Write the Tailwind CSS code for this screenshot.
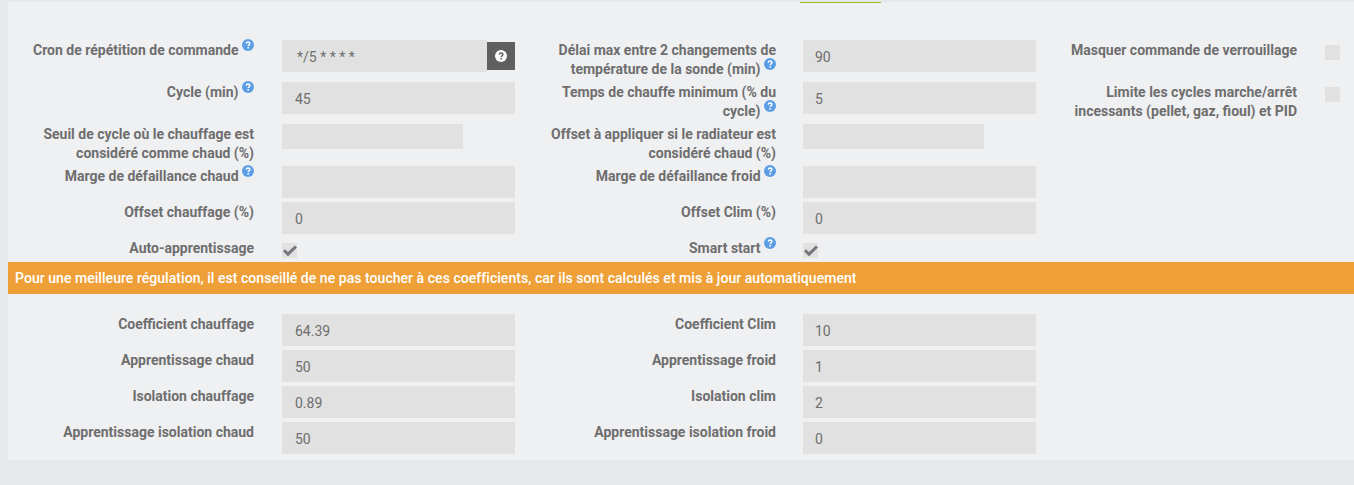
<!DOCTYPE html>
<html lang="fr">
<head>
  <meta charset="UTF-8">
  <title>Configuration thermostat</title>
  <script src="https://cdn.jsdelivr.net/npm/@tailwindcss/browser@4"></script>
</head>
<body class="bg-[#e7e8ea] font-['Roboto',sans-serif] text-[14px] leading-[19px] text-[#6e6e6e] overflow-hidden">
  <div class="h-[485px] pt-[2px] pl-[8px]">
    <div class="h-[458px] bg-[#eff0f2]">
      <!-- tab indicator -->
      <div class="ml-[792px] w-[81px] h-[1px] bg-[#94c11f]"></div>

      <!-- Main settings -->
      <form class="mt-[37px] grid grid-cols-[246px_261px_261px_260px_261px_1fr] grid-rows-[42px_42px_42px_36px_36px_24px]">
        <label class="col-start-1 pt-[1px] text-right font-bold">Cron de répétition de commande <svg class="inline-block align-[4px] -mt-[4px]" width="12" height="12" viewBox="0 0 12 12"><circle cx="6" cy="6" r="6" fill="#5c9ee6"/><path d="M4.2 4.6C4.3 3.6 5 3 6 3s1.9.6 1.9 1.6c0 1.3-1.7 1.3-1.7 2.5" fill="none" stroke="#fff" stroke-width="1.4"/><rect x="5.4" y="8" width="1.6" height="1.5" fill="#fff"/></svg></label>
        <div class="pl-[28px] flex items-center h-[32px]">
          <input class="w-[205px] h-[32px] pl-[15px] pt-[2px] bg-[#e0e1e0]" value="*/5 * * * *">
          <button type="button" class="w-[28px] h-[28px] bg-[#5f5f5f] flex items-center justify-center">
            <svg width="12" height="12" viewBox="0 0 12 12"><circle cx="6" cy="6" r="6" fill="#fff"/><path d="M4.2 4.6C4.3 3.6 5 3 6 3s1.9.6 1.9 1.6c0 1.3-1.7 1.3-1.7 2.5" fill="none" stroke="#5f5f5f" stroke-width="1.4"/><rect x="5.4" y="8" width="1.6" height="1.5" fill="#5f5f5f"/></svg>
          </button>
        </div>
        <label class="pl-[28px] pt-[1px] text-right font-bold">Délai max entre 2 changements de température de la sonde (min) <svg class="inline-block align-[4px] -mt-[4px]" width="12" height="12" viewBox="0 0 12 12"><circle cx="6" cy="6" r="6" fill="#5c9ee6"/><path d="M4.2 4.6C4.3 3.6 5 3 6 3s1.9.6 1.9 1.6c0 1.3-1.7 1.3-1.7 2.5" fill="none" stroke="#fff" stroke-width="1.4"/><rect x="5.4" y="8" width="1.6" height="1.5" fill="#fff"/></svg></label>
        <div class="pl-[27px]"><input class="w-[233px] h-[32px] pl-[12px] pt-[2px] bg-[#e0e1e0]" value="90"></div>
        <label class="pt-[1px] pl-[28px] text-right font-bold">Masquer commande de verrouillage</label>
        <div class="pl-[28px] pt-[5px]"><div class="w-[15px] h-[15px] bg-[#e0e1e0]"></div></div>

        <label class="col-start-1 pt-[1px] text-right font-bold">Cycle (min) <svg class="inline-block align-[4px] -mt-[4px]" width="12" height="12" viewBox="0 0 12 12"><circle cx="6" cy="6" r="6" fill="#5c9ee6"/><path d="M4.2 4.6C4.3 3.6 5 3 6 3s1.9.6 1.9 1.6c0 1.3-1.7 1.3-1.7 2.5" fill="none" stroke="#fff" stroke-width="1.4"/><rect x="5.4" y="8" width="1.6" height="1.5" fill="#fff"/></svg></label>
        <div class="pl-[28px]"><input class="w-[233px] h-[32px] pl-[13px] pt-[2px] bg-[#e0e1e0]" value="45"></div>
        <label class="pl-[28px] pt-[1px] text-right font-bold">Temps de chauffe minimum (% du cycle) <svg class="inline-block align-[4px] -mt-[4px]" width="12" height="12" viewBox="0 0 12 12"><circle cx="6" cy="6" r="6" fill="#5c9ee6"/><path d="M4.2 4.6C4.3 3.6 5 3 6 3s1.9.6 1.9 1.6c0 1.3-1.7 1.3-1.7 2.5" fill="none" stroke="#fff" stroke-width="1.4"/><rect x="5.4" y="8" width="1.6" height="1.5" fill="#fff"/></svg></label>
        <div class="pl-[27px]"><input class="w-[233px] h-[32px] pl-[12px] pt-[2px] bg-[#e0e1e0]" value="5"></div>
        <label class="pt-[1px] pl-[28px] text-right font-bold">Limite les cycles marche/arrêt incessants (pellet, gaz, fioul) et PID</label>
        <div class="pl-[28px] pt-[5px]"><div class="w-[15px] h-[15px] bg-[#e0e1e0]"></div></div>

        <label class="col-start-1 pt-[1px] text-right font-bold">Seuil de cycle où le chauffage est considéré comme chaud (%)</label>
        <div class="pl-[28px]"><input class="w-[181px] h-[25px] bg-[#e0e1e0]"></div>
        <label class="pl-[28px] pt-[1px] text-right font-bold">Offset à appliquer si le radiateur est considéré chaud (%)</label>
        <div class="pl-[27px]"><input class="w-[181px] h-[25px] bg-[#e0e1e0]"></div>

        <label class="col-start-1 pt-[1px] text-right font-bold">Marge de défaillance chaud <svg class="inline-block align-[4px] -mt-[4px]" width="12" height="12" viewBox="0 0 12 12"><circle cx="6" cy="6" r="6" fill="#5c9ee6"/><path d="M4.2 4.6C4.3 3.6 5 3 6 3s1.9.6 1.9 1.6c0 1.3-1.7 1.3-1.7 2.5" fill="none" stroke="#fff" stroke-width="1.4"/><rect x="5.4" y="8" width="1.6" height="1.5" fill="#fff"/></svg></label>
        <div class="pl-[28px]"><input class="w-[233px] h-[32px] bg-[#e0e1e0]"></div>
        <label class="pt-[1px] text-right font-bold">Marge de défaillance froid <svg class="inline-block align-[4px] -mt-[4px]" width="12" height="12" viewBox="0 0 12 12"><circle cx="6" cy="6" r="6" fill="#5c9ee6"/><path d="M4.2 4.6C4.3 3.6 5 3 6 3s1.9.6 1.9 1.6c0 1.3-1.7 1.3-1.7 2.5" fill="none" stroke="#fff" stroke-width="1.4"/><rect x="5.4" y="8" width="1.6" height="1.5" fill="#fff"/></svg></label>
        <div class="pl-[27px]"><input class="w-[233px] h-[32px] bg-[#e0e1e0]"></div>

        <label class="col-start-1 pt-[1px] text-right font-bold">Offset chauffage (%)</label>
        <div class="pl-[28px]"><input class="w-[233px] h-[32px] pl-[13px] pt-[2px] bg-[#e0e1e0]" value="0"></div>
        <label class="pt-[1px] text-right font-bold">Offset Clim (%)</label>
        <div class="pl-[27px]"><input class="w-[233px] h-[32px] pl-[12px] pt-[2px] bg-[#e0e1e0]" value="0"></div>

        <label class="col-start-1 pt-[1px] text-right font-bold">Auto-apprentissage</label>
        <div class="pl-[28px] pt-[5px]"><div class="w-[15px] h-[15px] bg-[#e0e1e0] flex items-center justify-center"><svg width="14" height="11" viewBox="0 0 14 11"><path d="M1 5.2 5 9.2 13 1.5" fill="none" stroke="#75757b" stroke-width="3"/></svg></div></div>
        <label class="pt-[1px] text-right font-bold">Smart start <svg class="inline-block align-[4px] -mt-[4px]" width="12" height="12" viewBox="0 0 12 12"><circle cx="6" cy="6" r="6" fill="#5c9ee6"/><path d="M4.2 4.6C4.3 3.6 5 3 6 3s1.9.6 1.9 1.6c0 1.3-1.7 1.3-1.7 2.5" fill="none" stroke="#fff" stroke-width="1.4"/><rect x="5.4" y="8" width="1.6" height="1.5" fill="#fff"/></svg></label>
        <div class="pl-[27px] pt-[5px]"><div class="w-[15px] h-[15px] bg-[#e0e1e0] flex items-center justify-center"><svg width="14" height="11" viewBox="0 0 14 11"><path d="M1 5.2 5 9.2 13 1.5" fill="none" stroke="#75757b" stroke-width="3"/></svg></div></div>
      </form>

      <!-- Warning -->
      <div class="h-[32px] pl-[7px] flex items-center bg-[#ef9f37] text-white font-medium tracking-[0.045px]">Pour une meilleure régulation, il est conseillé de ne pas toucher à ces coefficients, car ils sont calculés et mis à jour automatiquement</div>

      <!-- Coefficients -->
      <form class="mt-[20px] grid grid-cols-[246px_261px_261px_260px] auto-rows-[36px]">
        <label class="pt-[1px] text-right font-bold">Coefficient chauffage</label>
        <div class="pl-[28px]"><input class="w-[233px] h-[32px] pl-[13px] pt-[2px] bg-[#e0e1e0]" value="64.39"></div>
        <label class="pt-[1px] text-right font-bold">Coefficient Clim</label>
        <div class="pl-[27px]"><input class="w-[233px] h-[32px] pl-[12px] pt-[2px] bg-[#e0e1e0]" value="10"></div>

        <label class="pt-[1px] text-right font-bold">Apprentissage chaud</label>
        <div class="pl-[28px]"><input class="w-[233px] h-[32px] pl-[13px] pt-[2px] bg-[#e0e1e0]" value="50"></div>
        <label class="pt-[1px] text-right font-bold">Apprentissage froid</label>
        <div class="pl-[27px]"><input class="w-[233px] h-[32px] pl-[12px] pt-[2px] bg-[#e0e1e0]" value="1"></div>

        <label class="pt-[1px] text-right font-bold">Isolation chauffage</label>
        <div class="pl-[28px]"><input class="w-[233px] h-[32px] pl-[13px] pt-[2px] bg-[#e0e1e0]" value="0.89"></div>
        <label class="pt-[1px] text-right font-bold">Isolation clim</label>
        <div class="pl-[27px]"><input class="w-[233px] h-[32px] pl-[12px] pt-[2px] bg-[#e0e1e0]" value="2"></div>

        <label class="pt-[1px] text-right font-bold">Apprentissage isolation chaud</label>
        <div class="pl-[28px]"><input class="w-[233px] h-[32px] pl-[13px] pt-[2px] bg-[#e0e1e0]" value="50"></div>
        <label class="pt-[1px] text-right font-bold">Apprentissage isolation froid</label>
        <div class="pl-[27px]"><input class="w-[233px] h-[32px] pl-[12px] pt-[2px] bg-[#e0e1e0]" value="0"></div>
      </form>
    </div>
  </div>
</body>
</html>
